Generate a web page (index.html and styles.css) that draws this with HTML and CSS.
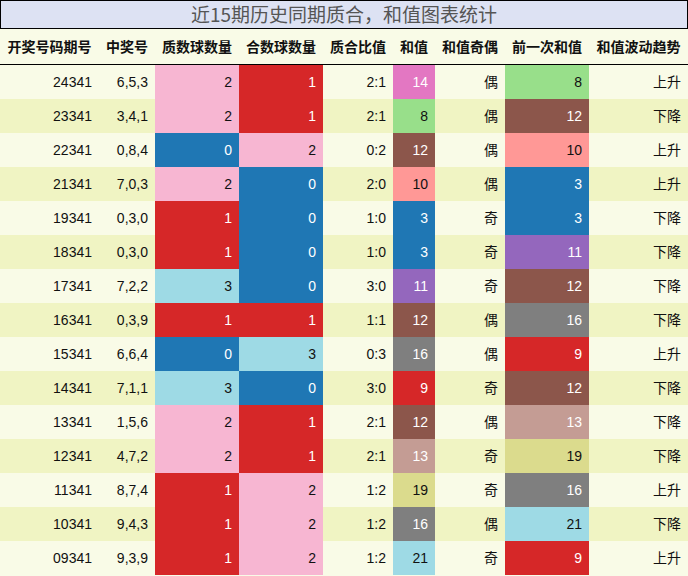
FILE: index.html
```html
<!DOCTYPE html>
<html lang="zh">
<head>
<meta charset="utf-8">
<title>近15期历史同期质合，和值图表统计</title>
<link rel="stylesheet" href="styles.css">
</head>
<body>
<div class="page">
  <div class="title">近15期历史同期质合，和值图表统计</div>
  <table class="stats">
    <colgroup>
      <col class="w-issue"><col class="w-num"><col class="w-84"><col class="w-84"><col class="w-70"><col class="w-42"><col class="w-70"><col class="w-84"><col class="w-trend">
    </colgroup>
    <thead>
      <tr><th>开奖号码期号</th><th>中奖号</th><th>质数球数量</th><th>合数球数量</th><th>质合比值</th><th>和值</th><th>和值奇偶</th><th>前一次和值</th><th>和值波动趋势</th></tr>
    </thead>
    <tbody>
      <tr><td>24341</td><td>6,5,3</td><td class="c-pink">2</td><td class="c-red">1</td><td>2:1</td><td class="c-magenta">14</td><td>偶</td><td class="c-lgreen">8</td><td>上升</td></tr>
      <tr><td>23341</td><td>3,4,1</td><td class="c-pink">2</td><td class="c-red">1</td><td>2:1</td><td class="c-lgreen">8</td><td>偶</td><td class="c-brown">12</td><td>下降</td></tr>
      <tr><td>22341</td><td>0,8,4</td><td class="c-blue">0</td><td class="c-pink">2</td><td>0:2</td><td class="c-brown">12</td><td>偶</td><td class="c-salmon">10</td><td>上升</td></tr>
      <tr><td>21341</td><td>7,0,3</td><td class="c-pink">2</td><td class="c-blue">0</td><td>2:0</td><td class="c-salmon">10</td><td>偶</td><td class="c-blue">3</td><td>上升</td></tr>
      <tr><td>19341</td><td>0,3,0</td><td class="c-red">1</td><td class="c-blue">0</td><td>1:0</td><td class="c-blue">3</td><td>奇</td><td class="c-blue">3</td><td>下降</td></tr>
      <tr><td>18341</td><td>0,3,0</td><td class="c-red">1</td><td class="c-blue">0</td><td>1:0</td><td class="c-blue">3</td><td>奇</td><td class="c-purple">11</td><td>下降</td></tr>
      <tr><td>17341</td><td>7,2,2</td><td class="c-cyan">3</td><td class="c-blue">0</td><td>3:0</td><td class="c-purple">11</td><td>奇</td><td class="c-brown">12</td><td>下降</td></tr>
      <tr><td>16341</td><td>0,3,9</td><td class="c-red">1</td><td class="c-red">1</td><td>1:1</td><td class="c-brown">12</td><td>偶</td><td class="c-gray">16</td><td>下降</td></tr>
      <tr><td>15341</td><td>6,6,4</td><td class="c-blue">0</td><td class="c-cyan">3</td><td>0:3</td><td class="c-gray">16</td><td>偶</td><td class="c-red">9</td><td>上升</td></tr>
      <tr><td>14341</td><td>7,1,1</td><td class="c-cyan">3</td><td class="c-blue">0</td><td>3:0</td><td class="c-red">9</td><td>奇</td><td class="c-brown">12</td><td>下降</td></tr>
      <tr><td>13341</td><td>1,5,6</td><td class="c-pink">2</td><td class="c-red">1</td><td>2:1</td><td class="c-brown">12</td><td>偶</td><td class="c-tan">13</td><td>下降</td></tr>
      <tr><td>12341</td><td>4,7,2</td><td class="c-pink">2</td><td class="c-red">1</td><td>2:1</td><td class="c-tan">13</td><td>奇</td><td class="c-olive">19</td><td>下降</td></tr>
      <tr><td>11341</td><td>8,7,4</td><td class="c-red">1</td><td class="c-pink">2</td><td>1:2</td><td class="c-olive">19</td><td>奇</td><td class="c-gray">16</td><td>上升</td></tr>
      <tr><td>10341</td><td>9,4,3</td><td class="c-red">1</td><td class="c-pink">2</td><td>1:2</td><td class="c-gray">16</td><td>偶</td><td class="c-cyan">21</td><td>下降</td></tr>
      <tr><td>09341</td><td>9,3,9</td><td class="c-red">1</td><td class="c-pink">2</td><td>1:2</td><td class="c-cyan">21</td><td>奇</td><td class="c-red">9</td><td>上升</td></tr>
    </tbody>
  </table>
</div>
</body>
</html>
```

FILE: styles.css
```css
html, body {
  margin: 0;
  padding: 0;
  background: #f9fbe7;
}
.page {
  width: 688px;
  font-family: "Liberation Sans", "Noto Sans CJK SC", sans-serif;
  color: #111;
}
.title {
  box-sizing: border-box;
  height: 29px;
  border: 1px solid #000;
  background: #dde2f3;
  color: #555;
  font-size: 19px;
  line-height: 26px;
  text-align: center;
  font-family: "Noto Sans CJK SC", sans-serif;
}
.stats {
  width: 688px;
  table-layout: fixed;
  border-collapse: separate;
  border-spacing: 0;
  font-size: 14px;
}
.w-issue { width: 99px; }
.w-num { width: 56px; }
.w-84 { width: 84px; }
.w-70 { width: 70px; }
.w-42 { width: 42px; }
.w-trend { width: 99px; }
.stats th {
  height: 35px;
  padding: 0;
  font-weight: bold;
  text-align: center;
  white-space: nowrap;
  border-bottom: 1px solid #000;
  background: #f9fbe7;
  line-height: 20px;
}
.stats td {
  height: 34px;
  padding: 0 7px 0 0;
  text-align: right;
  white-space: nowrap;
  line-height: 20px;
}
.stats tbody tr:nth-child(odd) td { background: #f9fbe7; }
.stats tbody tr:nth-child(even) td { background: #f0f4c3; }
.stats tbody tr td.c-pink { background: #f7b6d2; color: #111; }
.stats tbody tr td.c-red { background: #d62728; color: #fff; }
.stats tbody tr td.c-blue { background: #1f77b4; color: #fff; }
.stats tbody tr td.c-cyan { background: #9edae5; color: #111; }
.stats tbody tr td.c-lgreen { background: #98df8a; color: #111; }
.stats tbody tr td.c-salmon { background: #ff9896; color: #111; }
.stats tbody tr td.c-purple { background: #9467bd; color: #fff; }
.stats tbody tr td.c-brown { background: #8c564b; color: #fff; }
.stats tbody tr td.c-tan { background: #c49c94; color: #fff; }
.stats tbody tr td.c-magenta { background: #e377c2; color: #fff; }
.stats tbody tr td.c-gray { background: #7f7f7f; color: #fff; }
.stats tbody tr td.c-olive { background: #dbdb8d; color: #111; }
```
